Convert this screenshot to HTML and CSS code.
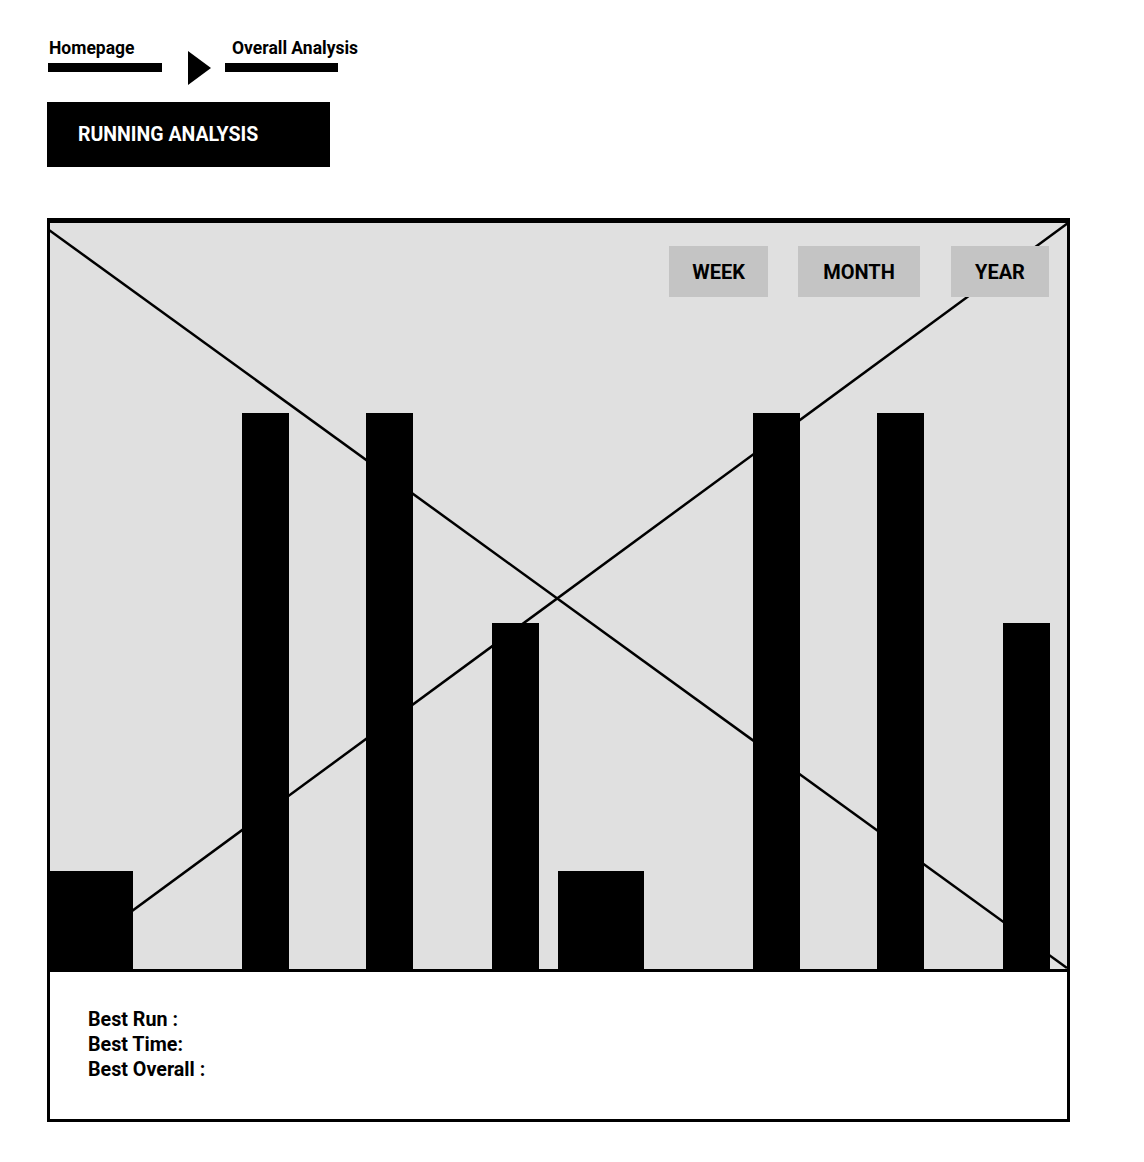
FILE: index.html
```html
<!DOCTYPE html>
<html lang="en">
<head>
<meta charset="utf-8">
<title>Running Analysis</title>
<link rel="stylesheet" href="styles.css">
</head>
<body>
<nav class="breadcrumb">
  <div class="crumb crumb-home">
    <span class="crumb-label">Homepage</span>
    <span class="crumb-bar"></span>
  </div>
  <span class="crumb-arrow"></span>
  <div class="crumb crumb-current">
    <span class="crumb-label">Overall Analysis</span>
    <span class="crumb-bar"></span>
  </div>
</nav>

<h1 class="page-title">RUNNING ANALYSIS</h1>

<section class="card">
  <div class="chart">
    <svg class="chart-x" viewBox="0 0 1017 746" preserveAspectRatio="none" aria-hidden="true">
      <line x1="-1" y1="7" x2="1017" y2="745" />
      <line x1="1018" y1="0" x2="-1" y2="749" />
    </svg>
    <div class="range-tabs">
      <button class="tab tab-week">WEEK</button>
      <button class="tab tab-month">MONTH</button>
      <button class="tab tab-year">YEAR</button>
    </div>
    <div class="bars">
      <span class="bar bar-1" style="height:98px"></span>
      <span class="bar bar-2" style="height:556px"></span>
      <span class="bar bar-3" style="height:556px"></span>
      <span class="bar bar-4" style="height:346px"></span>
      <span class="bar bar-5" style="height:98px"></span>
      <span class="bar bar-6" style="height:556px"></span>
      <span class="bar bar-7" style="height:556px"></span>
      <span class="bar bar-8" style="height:346px"></span>
    </div>
  </div>
  <div class="stats">
    <p>Best Run :</p>
    <p>Best Time:</p>
    <p>Best Overall :</p>
  </div>
</section>
</body>
</html>
```

FILE: styles.css
```css
* { box-sizing: border-box; }

body {
  margin: 0;
  background: #ffffff;
  color: #000000;
  font-family: Roboto, "Liberation Sans", Arial, sans-serif;
}

/* Breadcrumb */
.breadcrumb {
  display: flex;
  align-items: flex-start;
  padding: 39px 0 0 48px;
}

.crumb {
  display: flex;
  flex-direction: column;
  width: 114px;
}

.crumb-label {
  font-size: 17.5px;
  font-weight: 700;
  line-height: 19px;
  white-space: nowrap;
}

.crumb-home .crumb-label { padding-left: 1px; }
.crumb-current { width: 113px; }
.crumb-current .crumb-label { padding-left: 7px; }

.crumb-bar {
  display: block;
  height: 9px;
  margin-top: 5px;
  background: #000;
}

.crumb-arrow {
  width: 0;
  height: 0;
  margin: 12px 14px 0 26px;
  border-left: 23px solid #000;
  border-top: 17px solid transparent;
  border-bottom: 17px solid transparent;
}

/* Title */
.page-title {
  display: flex;
  align-items: center;
  width: 283px;
  height: 65px;
  margin: 17px 0 0 47px;
  padding-left: 31px;
  background: #000;
  color: #fff;
  font-size: 19.5px;
  font-weight: 700;
  letter-spacing: 0;
}

/* Card */
.card {
  width: 1023px;
  margin: 51px 0 0 47px;
  border: 3px solid #000;
  border-top-width: 5px;
}

.chart {
  position: relative;
  display: flex;
  flex-direction: column;
  height: 749px;
  background: #e0e0e0;
  border-bottom: 3px solid #000;
}

.chart-x {
  position: absolute;
  left: 0;
  top: 0;
  width: 100%;
  height: 746px;
  overflow: hidden;
}

.chart-x line {
  stroke: #000;
  stroke-width: 2.5;
  vector-effect: non-scaling-stroke;
}

.range-tabs {
  position: relative;
  display: flex;
  justify-content: flex-end;
  gap: 30px;
  padding: 23px 18px 0 0;
}

.tab {
  height: 51px;
  padding: 0;
  border: 0;
  background: #c4c4c4;
  color: #000;
  font-family: inherit;
  font-size: 20px;
  font-weight: 700;
}

.tab-week { width: 99px; }
.tab-month { width: 122px; margin-right: 1px; }
.tab-year { width: 98px; }

.bars {
  position: relative;
  flex: 1;
  display: flex;
  align-items: flex-end;
}

.bar {
  display: block;
  width: 47px;
  background: #000;
}

.bar-1 { width: 83px; }
.bar-2 { margin-left: 109px; }
.bar-3 { margin-left: 77px; }
.bar-4 { margin-left: 79px; }
.bar-5 { margin-left: 19px; width: 86px; }
.bar-6 { margin-left: 109px; }
.bar-7 { margin-left: 77px; }
.bar-8 { margin-left: 79px; }

/* Stats */
.stats {
  padding: 35px 38px 37px;
  background: #fff;
}

.stats p {
  margin: 0;
  font-size: 19.7px;
  font-weight: 700;
  line-height: 25px;
}
```
